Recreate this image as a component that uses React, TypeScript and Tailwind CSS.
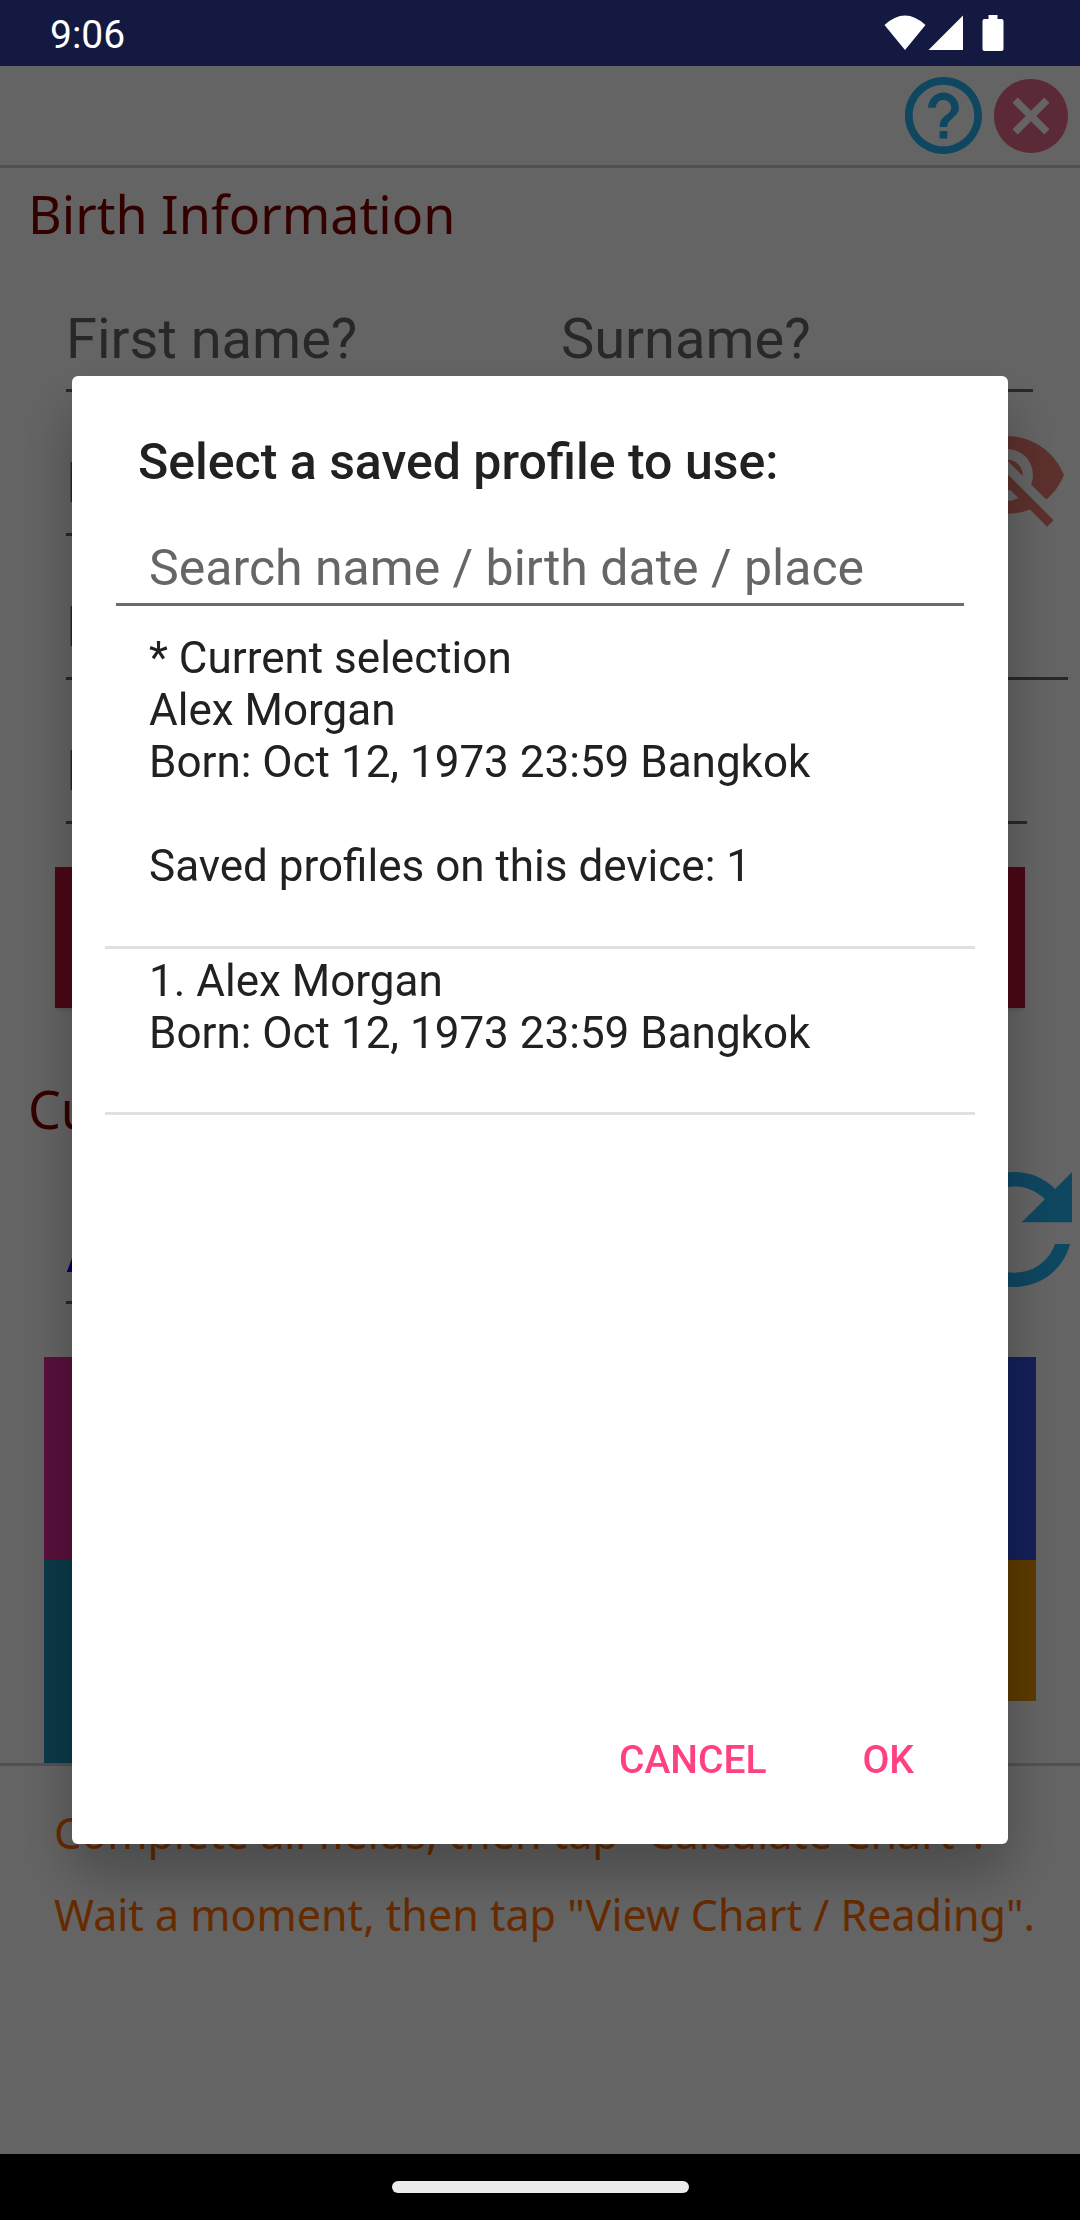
import { useState } from 'react'

const profiles = [
  { id: 1, name: 'Alex Morgan', born: 'Oct 12, 1973 23:59 Bangkok' }
]

const fieldClass =
  "h-[108px] min-w-0 border-b-[3px] border-[#646464] bg-transparent pt-[5px] font-['Roboto',sans-serif] text-[56px] text-[#505050] outline-none placeholder:text-[#646464] placeholder:opacity-100"

const headingClass =
  "h-[100px] px-7 pt-3 font-['Noto_Sans',sans-serif] text-[52px] leading-[68px] text-[#800000]"

function StatusBar() {
  return (
    <div className="relative z-20 flex h-[66px] items-center justify-between bg-[#141941] pr-[76px] pl-[50px] text-white">
      <span className="pt-1 font-['Roboto',sans-serif] text-[39px] leading-[62px]">9:06</span>
      <div className="flex items-center">
        <svg width="42" height="36" viewBox="0 0 42 36" fill="currentColor" aria-hidden="true">
          <path d="M0.5 10 Q21 -9 41.500 10 L21 35 Z" />
        </svg>
        <svg className="ml-0.5" width="36" height="36" viewBox="0 0 36 36" fill="currentColor" aria-hidden="true">
          <path d="M35 0.500V35H0.500Z" />
        </svg>
        <svg className="ml-[18px]" width="22" height="36" viewBox="0 0 22 36" fill="currentColor" aria-hidden="true">
          <path d="M6.500 0h9v4H19.500a2 2 0 0 1 2 2V34a2 2 0 0 1-2 2H2.500a2 2 0 0 1-2-2V6a2 2 0 0 1 2-2H6.500Z" />
        </svg>
      </div>
    </div>
  )
}

function TopBar() {
  return (
    <header className="flex h-[102px] items-center justify-end gap-3 border-b-[3px] border-[#cbcbcb] pr-3">
      <button type="button" aria-label="Help" className="text-[#26b0f0]">
        <svg width="77" height="77" viewBox="2 2 20 20" fill="currentColor">
          <path d="M11 18h2v-2h-2v2zm1-16C6.480 2 2 6.480 2 12s4.480 10 10 10 10-4.480 10-10S17.520 2 12 2zm0 18c-4.410 0-8-3.590-8-8s3.590-8 8-8 8 3.590 8 8-3.590 8-8 8zm0-14c-2.210 0-4 1.790-4 4h2c0-1.100.9-2 2-2s2 .9 2 2c0 2-3 1.750-3 5h2c0-2.250 3-2.500 3-5 0-2.210-1.790-4-4-4z" />
        </svg>
      </button>
      <button type="button" aria-label="Close" className="text-[#e66987]">
        <svg width="74" height="74" viewBox="2 2 20 20" fill="currentColor">
          <path d="M12 2C6.470 2 2 6.470 2 12s4.470 10 10 10 10-4.470 10-10S17.530 2 12 2zm5 13.590L15.590 17 12 13.410 8.410 17 7 15.590 10.590 12 7 8.410 8.410 7 12 10.590 15.590 7 17 8.410 13.410 12 17 15.590z" />
        </svg>
      </button>
    </header>
  )
}

function BirthForm() {
  return (
    <form onSubmit={e => e.preventDefault()}>
      <h2 className={headingClass}>Birth Information</h2>

      <div className="mt-4 flex flex-col gap-9 pl-[66px]">
        <div className="flex pr-[47px]">
          <input aria-label="First name" placeholder="First name?" className={`${fieldClass} w-[495px]`} />
          <input aria-label="Surname" placeholder="Surname?" className={`${fieldClass} flex-1`} />
        </div>
        <div className="flex items-start gap-6 pr-4">
          <input aria-label="Birth date" placeholder="Birth date?" className={`${fieldClass} flex-1`} />
          <button type="button" aria-label="Hide details" className="text-[#e67870]">
            <svg width="114" height="99" viewBox="1 3 22 19" fill="currentColor">
              <path d="M12 7c2.760 0 5 2.240 5 5 0 .65-.13 1.260-.36 1.830l2.920 2.920c1.510-1.260 2.700-2.890 3.430-4.750-1.730-4.390-6-7.500-11-7.500-1.400 0-2.740.25-3.980.7l2.160 2.160C10.740 7.130 11.350 7 12 7zM2 4.270l2.280 2.280.46.46C3.080 8.300 1.780 10.020 1 12c1.730 4.390 6 7.500 11 7.500 1.550 0 3.030-.3 4.380-.84l.42.42L19.730 22 21 20.730 3.270 3 2 4.270zM7.530 9.800l1.550 1.550c-.05.21-.08.43-.08.65 0 1.660 1.340 3 3 3 .22 0 .44-.03.65-.08l1.550 1.550c-.67.33-1.410.53-2.200.53-2.760 0-5-2.240-5-5 0-.79.2-1.530.53-2.200zm4.310-.78l3.150 3.150.02-.16c0-1.660-1.340-3-3-3l-.17.01z" />
            </svg>
          </button>
        </div>
        <div className="flex pr-3">
          <input aria-label="Birth time" placeholder="Birth time?" className={`${fieldClass} flex-1`} />
        </div>
        <div className="flex pr-[53px]">
          <input aria-label="Birth place" placeholder="Birth place?" className={`${fieldClass} flex-1`} />
        </div>
      </div>

      <div className="mt-[43px] px-[55px]">
        <button
          type="submit"
          className="h-[141px] w-full bg-[#b91434] font-['Roboto',sans-serif] text-[44px] text-white shadow-md"
        >
          Calculate Chart
        </button>
      </div>

      <h2 className={`${headingClass} mt-[55px]`}>Current Location</h2>

      <div className="mt-[9px] flex h-[132px] items-start gap-6 pr-2 pl-[66px]">
        <input
          aria-label="Current place"
          defaultValue="Ayutthaya"
          className="h-[132px] min-w-0 flex-1 border-b-[3px] border-[#646464] bg-transparent pt-9 font-['Roboto',sans-serif] text-[52px] text-[#0000ff] outline-none"
        />
        <button type="button" aria-label="Refresh" className="text-[#26b0f0]">
          <svg width="115" height="115" viewBox="4 4 16 16" fill="currentColor">
            <path d="M17.650 6.350C16.200 4.900 14.210 4 12 4c-4.420 0-7.990 3.580-7.990 8s3.570 8 7.990 8c3.730 0 6.840-2.550 7.730-6h-2.080c-.82 2.330-3.040 4-5.650 4-3.310 0-6-2.690-6-6s2.690-6 6-6c1.660 0 3.140.69 4.220 1.780L13 11h7V4l-2.350 2.350z" />
          </svg>
        </button>
      </div>
    </form>
  )
}

function ProfileDialog() {
  const [search, setSearch] = useState('')
  const current = profiles[0]

  return (
    <div className="fixed inset-0 z-10 flex items-center bg-black/60 px-[72px] font-['Roboto',sans-serif] text-[#212121]">
      <div
        role="dialog"
        aria-labelledby="dialog-title"
        className="w-full rounded-md bg-white px-[33px] pt-[52px] pb-[26px] shadow-[0_30px_54px_rgba(0,0,0,0.28)]"
      >
        <h1 id="dialog-title" className="px-[33px] text-[50px] leading-[68px] font-medium">
          Select a saved profile to use:
        </h1>

        <div className="mt-6 px-[11px]">
          <input
            aria-label="Search profiles"
            value={search}
            onChange={e => setSearch(e.target.value)}
            placeholder="Search name / birth date / place"
            className="h-[86px] w-full border-b-[3px] border-[#6c6c6c] px-[33px] pt-3 text-[50px] outline-none placeholder:text-[#666666] placeholder:opacity-100"
          />
        </div>

        <div className="h-[1096px] pt-[26px] text-[44px] leading-[52px]">
          <div className="border-b-[3px] border-[#e0e0e0] px-11 pb-[54px]">
            <p>* Current selection</p>
            <p>{current.name}</p>
            <p>Born: {current.born}</p>
            <p className="mt-[52px]">Saved profiles on this device: {profiles.length}</p>
          </div>
          <ul>
            {profiles.map(p => (
              <li key={p.id} className="border-b-[3px] border-[#e0e0e0]">
                <button type="button" className="block w-full px-11 pt-[6px] pb-[53px] text-left">
                  <span className="block">{p.id}. {p.name}</span>
                  <span className="block">Born: {p.born}</span>
                </button>
              </li>
            ))}
          </ul>
        </div>

        <div className="flex justify-end gap-8 pr-[29px] text-[39px] font-medium text-[#ff4081]">
          <button type="button" className="h-[116px] px-8">CANCEL</button>
          <button type="button" className="h-[116px] px-8">OK</button>
        </div>
      </div>
    </div>
  )
}

export default function App() {
  return (
    <div className="flex min-h-screen flex-col bg-[#fafafa]">
      <StatusBar />
      <main className="flex-1">
        <TopBar />
        <BirthForm />
        <div className="mt-[53px] grid grid-cols-2 items-start px-11 font-['Roboto',sans-serif] text-[44px] text-white">
          <button type="button" className="h-[203px] bg-[#dc2896]">View Chart</button>
          <button type="button" className="h-[203px] bg-[#3250dc]">Reading</button>
          <button type="button" className="h-[203px] bg-[#1e91b4]">Profiles</button>
          <button type="button" className="h-[141px] bg-[#e69100]">Settings</button>
        </div>
        <div className="border-t-[3px] border-[#cbcbcb] px-[54px] pt-[26px] font-['Noto_Sans',sans-serif] text-[43px] leading-[82px] whitespace-nowrap text-[#ff6b00]">
          <p>Complete all fields, then tap "Calculate Chart".</p>
          <p>Wait a moment, then tap "View Chart / Reading".</p>
        </div>
      </main>
      <ProfileDialog />
      <nav className="relative z-20 flex h-[66px] items-center justify-center bg-black">
        <div className="h-3 w-[297px] rounded-full bg-[#ececec]" />
      </nav>
    </div>
  )
}
